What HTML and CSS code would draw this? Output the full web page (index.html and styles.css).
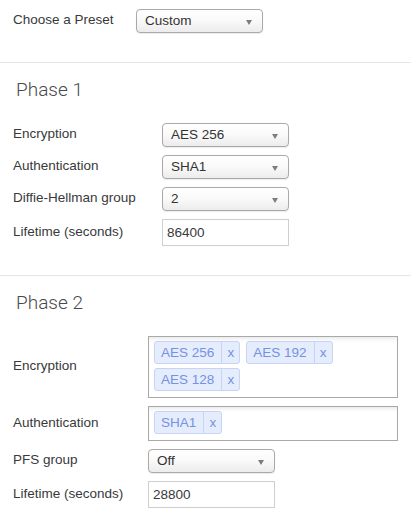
FILE: index.html
```html
<!DOCTYPE html>
<html lang="en">
<head>
  <meta charset="UTF-8" />
  <meta name="viewport" content="width=device-width, initial-scale=1"/>
  <title>IPsec Policy</title>
  <link rel="stylesheet" href="styles.css">
</head>
<body>
  <div class="section section-top">
    <div class="form-grid grid-preset">
      <label>Choose a Preset</label>
      <div class="select"><span>Custom</span></div>
    </div>
  </div>

  <div class="section">
    <h2>Phase 1</h2>
    <div class="form-grid grid-phase1">
      <label>Encryption</label>
      <div class="select"><span>AES 256</span></div>

      <label>Authentication</label>
      <div class="select"><span>SHA1</span></div>

      <label>Diffie-Hellman group</label>
      <div class="select"><span>2</span></div>

      <label>Lifetime (seconds)</label>
      <input class="text-input" type="text" value="86400" />
    </div>
  </div>

  <div class="section">
    <h2>Phase 2</h2>
    <div class="form-grid grid-phase2">
      <label>Encryption</label>
      <div class="multi">
        <span class="tag"><span class="tag-text">AES 256</span><span class="tag-x">x</span></span>
        <span class="tag"><span class="tag-text">AES 192</span><span class="tag-x">x</span></span>
        <span class="tag"><span class="tag-text">AES 128</span><span class="tag-x">x</span></span>
      </div>

      <label>Authentication</label>
      <div class="multi">
        <span class="tag"><span class="tag-text">SHA1</span><span class="tag-x">x</span></span>
      </div>

      <label>PFS group</label>
      <div class="select"><span>Off</span></div>

      <label>Lifetime (seconds)</label>
      <input class="text-input" type="text" value="28800" />
    </div>
  </div>
</body>
</html>
```

FILE: styles.css
```css
body {
  margin: 0;
  font-family: 'Liberation Sans', Arial, sans-serif;
  font-size: 13.5px;
  color: #39393b;
  background: #fff;
}
.section {
  border-top: 1px solid #e6e6e6;
  padding: 16px 13px 29px 13px;
}
.section-top {
  border-top: none;
  padding-top: 9px;
}
h2 {
  font-family: Roboto, 'Liberation Sans', sans-serif;
  font-weight: 300;
  font-size: 19px;
  line-height: 22px;
  color: #4a4a4c;
  margin: 0 0 22px 3px;
}
.form-grid {
  display: grid;
  row-gap: 8px;
  align-items: center;
}
.grid-preset {
  grid-template-columns: 123px 127px;
}
.grid-phase1 {
  grid-template-columns: 149px 127px;
}
.grid-phase2 {
  grid-template-columns: 135px 250px;
}
label {
  display: block;
  line-height: 16px;
  margin-top: -2px;
}
.select {
  position: relative;
  box-sizing: border-box;
  width: 127px;
  height: 24px;
  border: 1px solid #a9a9ab;
  border-radius: 4px;
  background: linear-gradient(to bottom, #ffffff 0%, #f9f9f9 50%, #ececec 100%);
  box-shadow: 0 1px 1px rgba(0,0,0,0.08);
  padding: 0 8px;
  line-height: 22px;
  color: #333;
}
/* little arrow on the right */
.select::after {
  content: "";
  position: absolute;
  right: 10px;
  top: 10px;
  border-left: 3.5px solid transparent;
  border-right: 3.5px solid transparent;
  border-top: 5px solid #7c7c7e;
}
.text-input {
  box-sizing: border-box;
  width: 127px;
  height: 27px;
  border: 1px solid #cfcfd1;
  border-radius: 0;
  padding: 0 4px;
  margin: 0;
  font-family: 'Liberation Sans', Arial, sans-serif;
  font-size: 13.5px;
  color: #39393b;
  outline: none;
}
.multi {
  box-sizing: border-box;
  width: 250px;
  border: 1px solid #a9a9ab;
  padding: 4px 5px 6px 5px;
  display: flex;
  flex-wrap: wrap;
  gap: 4px 6px;
  box-shadow: inset 0 5px 5px -4px rgba(0,0,0,0.12);
}
.tag {
  display: flex;
  box-sizing: border-box;
  height: 23px;
  line-height: 21px;
  border: 1px solid #c6d5f6;
  border-radius: 3px;
  background: #e5ecfc;
  color: #7591e6;
}
.tag-text {
  padding: 0 7px 0 6px;
}
.tag-x {
  width: 17px;
  text-align: center;
  border-left: 1px solid #c6d5f6;
}
```
